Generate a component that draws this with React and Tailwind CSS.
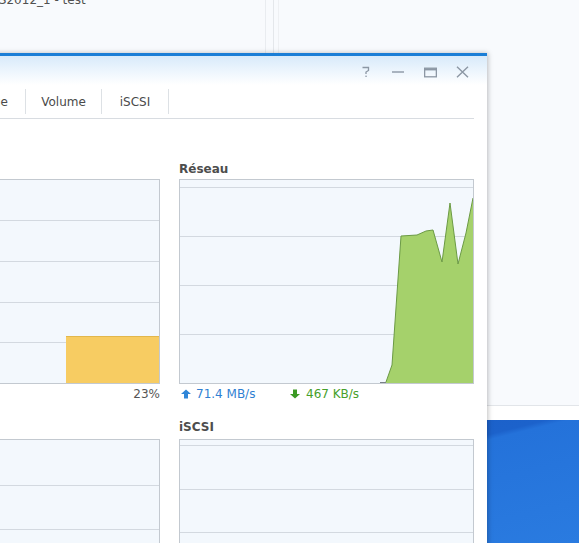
import React from "react";

const font = { fontFamily: '"DejaVu Sans", Verdana, sans-serif' };

function Controls() {
  const c = "#8c97a4";
  return (
    <div className="flex h-full items-center justify-end pr-[9px] pt-[3px]">
      <div className="flex w-[32px] justify-center">
        <svg width="12" height="12" viewBox="0 0 12 12" fill="none" stroke={c} strokeWidth="1.3">
          <path d="M2.5 1.5 H8.5 V4.5 L6 6 V8" />
          <rect x="5.4" y="9.6" width="1.3" height="1.4" fill={c} stroke="none" />
        </svg>
      </div>
      <div className="flex w-[32px] justify-center">
        <svg width="14" height="12" viewBox="0 0 14 12" fill="none" stroke={c} strokeWidth="1.4">
          <path d="M1 6 H13" />
        </svg>
      </div>
      <div className="flex w-[32px] justify-center">
        <svg width="13" height="11" viewBox="0 0 13 11" fill="none" stroke={c} strokeWidth="1.3">
          <rect x="0.65" y="1.2" width="11.7" height="8.6" />
          <path d="M0.65 2.4 H12.35" strokeWidth="2" />
        </svg>
      </div>
      <div className="flex w-[32px] justify-center">
        <svg width="13" height="12" viewBox="0 0 13 12" fill="none" stroke={c} strokeWidth="1.4">
          <path d="M1 0.8 L12 11.2 M12 0.8 L1 11.2" />
        </svg>
      </div>
    </div>
  );
}

function GridLines({ ys }) {
  return ys.map((y) => (
    <line key={y} x1="0" x2="293" y1={y + 0.5} y2={y + 0.5} stroke="#d3d9e0" strokeWidth="1" />
  ));
}

function ChartBox({ children }) {
  return (
    <div className="h-[205px] w-[295px] border border-[#c3c9d0] bg-[#f3f8fd]">
      <svg width="293" height="203" viewBox="0 0 293 203" className="block">
        {children}
      </svg>
    </div>
  );
}

export default function App() {
  const pts =
    "206,203 206,202 212,185 221,56 237,55 246,51 253,50 262,82 270,23 278,84 286,53 293,18 293,203";
  const line =
    "206,202 212,185 221,56 237,55 246,51 253,50 262,82 270,23 278,84 286,53 293,18";
  return (
    <div className="relative h-[543px] w-[579px] overflow-hidden bg-white" style={font}>
      {/* background window */}
      <div className="flex h-[405px] flex-col bg-[#f8fafd]">
        <div className="flex h-[53px]">
          <div className="relative w-[265px]">
            <div className="ml-[-13px] mt-[-8px] text-[12px] leading-[16px] text-[#505050]">
              WS2012_1 - test
            </div>
          </div>
          <div className="w-px bg-[#e9ecf0]" />
          <div className="w-[7px]" />
          <div className="w-px bg-[#e4e7eb]" />
          <div className="w-[4px]" />
          <div className="w-px bg-[#eef0f3]" />
        </div>
      </div>
      <div className="h-[15px] border-t border-[#e2e5e9] bg-white" />
      <div className="h-[123px] bg-[linear-gradient(166deg,#1a5bc3_0%,#1c62cb_51%,#2472da_53%,#2a7be0_100%)]" />

      {/* main window */}
      <div className="absolute left-[-150px] top-[53px] h-[520px] w-[637px] bg-white shadow-[1px_0_5px_rgba(0,0,0,0.25)]">
        <div className="h-[32px] border-t-[3px] border-[#1b7ed6] bg-[linear-gradient(180deg,#d8eafa_0%,#eef6fd_55%,#ffffff_100%)]">
          <Controls />
        </div>
        <div className="mr-[13px] flex h-[34px] items-center border-b border-[#d8dce1] text-[12px] leading-[16px] text-[#4a4a4a]">
          <div className="w-[175px] pr-[17px] text-right">Disque</div>
          <div className="h-[25px] w-px bg-[#dde1e5]" />
          <div className="w-[75px] text-center">Volume</div>
          <div className="h-[25px] w-px bg-[#dde1e5]" />
          <div className="w-[66px] text-center">iSCSI</div>
          <div className="h-[25px] w-px bg-[#dde1e5]" />
        </div>

        <div className="grid grid-cols-[295px_295px] gap-x-[19px] pl-[15px] pr-[13px] pt-[42px] text-[12px] leading-[16px]">
          {/* row 1 left */}
          <div>
            <div className="h-[16px]" />
            <div className="mt-[2px]">
              <ChartBox>
                <GridLines ys={[40, 81, 122, 162]} />
                <rect x="200" y="156" width="93" height="47" fill="#f7cc62" />
                <line x1="200" x2="293" y1="156.5" y2="156.5" stroke="#e2b74c" />
              </ChartBox>
            </div>
            <div className="mt-[2px] h-[16px] text-right text-[#555]">23%</div>
          </div>
          {/* row 1 right */}
          <div>
            <div className="h-[16px] font-bold text-[#4d4d4d]">Réseau</div>
            <div className="mt-[2px]">
              <ChartBox>
                <GridLines ys={[7, 56, 105, 154]} />
                <polyline points="200,202.5 206,202.5" fill="none" stroke="#7a8088" strokeWidth="1" />
                <polygon points={pts} fill="#a5d16b" />
                <polyline points={line} fill="none" stroke="#6b9a45" strokeWidth="1" />
              </ChartBox>
            </div>
            <div className="mt-[2px] flex h-[16px] items-center">
              <div className="flex w-[111px] items-center pl-[2px] text-[#2f7fd2]">
                <svg width="10" height="10" viewBox="0 0 10 10" className="mr-[5px]">
                  <path d="M5 0.5 L10 5 H7 V9.5 H3 V5 H0 Z" fill="#2f86d8" />
                </svg>
                <span>71.4 MB/s</span>
              </div>
              <div className="flex items-center text-[#46a02a]">
                <svg width="10" height="10" viewBox="0 0 10 10" className="mr-[6px]">
                  <path d="M5 9.5 L10 5 H7 V0.5 H3 V5 H0 Z" fill="#3c9a25" />
                </svg>
                <span>467 KB/s</span>
              </div>
            </div>
          </div>
          {/* row 2 */}
          <div className="mt-[17px]">
            <div className="h-[16px]" />
            <div className="mt-[4px]">
              <ChartBox>
                <GridLines ys={[45, 89, 133, 177]} />
              </ChartBox>
            </div>
          </div>
          <div className="mt-[17px]">
            <div className="h-[16px] font-bold text-[#4d4d4d]">iSCSI</div>
            <div className="mt-[4px]">
              <ChartBox>
                <GridLines ys={[5, 49, 92, 136, 180]} />
              </ChartBox>
            </div>
          </div>
        </div>
      </div>
    </div>
  );
}
